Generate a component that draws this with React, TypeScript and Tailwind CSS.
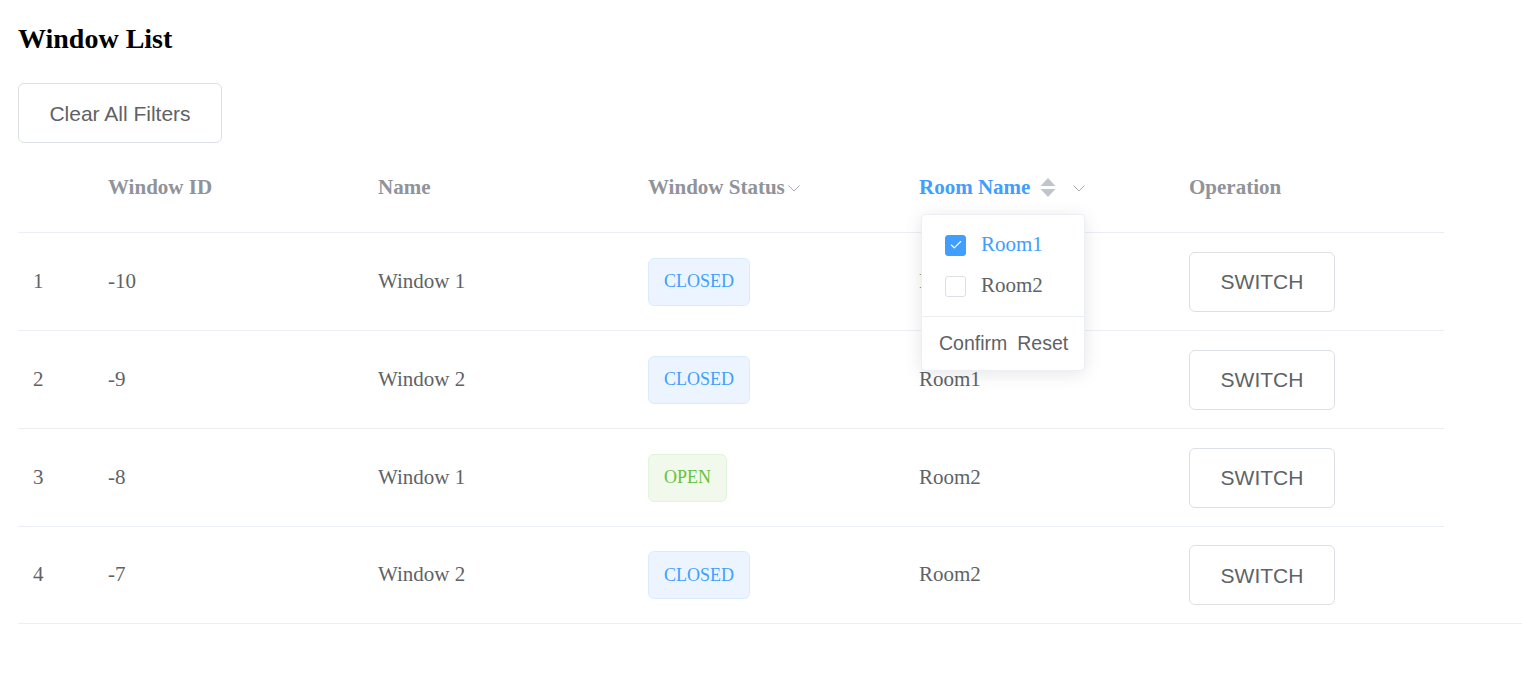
import { Check } from 'lucide-react';

const ROWS = [
  { idx: 1, id: '-10', name: 'Window 1', status: 'CLOSED', room: 'Room1' },
  { idx: 2, id: '-9', name: 'Window 2', status: 'CLOSED', room: 'Room1' },
  { idx: 3, id: '-8', name: 'Window 1', status: 'OPEN', room: 'Room2' },
  { idx: 4, id: '-7', name: 'Window 2', status: 'CLOSED', room: 'Room2' },
];

const COLS = 'grid grid-cols-[75px_270px_270px_271px_270px_270px]';

function Chevron() {
  return (
    <svg width="12" height="7" viewBox="0 0 12 7" fill="none" className="ml-[3px] mt-[2px]">
      <path d="M0.5 0.5 L6 6 L11.5 0.5" stroke="#a8abb2" strokeWidth="1" />
    </svg>
  );
}

function SortCaret() {
  return (
    <svg width="16" height="19" viewBox="0 0 16 19" className="ml-[10px]">
      <path d="M8 0 L15.5 8 L0.5 8 Z" fill="#c0c4cc" />
      <path d="M0.5 11 L15.5 11 L8 19 Z" fill="#c0c4cc" />
    </svg>
  );
}

function StatusTag({ status }: { status: string }) {
  const open = status === 'OPEN';
  return (
    <span
      className={
        'inline-flex h-[48px] items-center rounded-[6px] border px-[15px] text-[18px] ' +
        (open ? 'border-[#e1f3d8] bg-[#f0f9eb] text-[#67c23a]' : 'border-[#d9ecff] bg-[#ecf5ff] text-[#409eff]')
      }
    >
      {status}
    </span>
  );
}

export default function App() {
  return (
    <div className="min-h-screen bg-white pl-[18px] font-['Liberation_Serif',serif] text-[21px] text-[#606266]">
      <h3 className="pt-[22px] text-[28px] font-bold leading-[34px] text-black">Window List</h3>

      <button className="mt-[27px] h-[60px] w-[204px] rounded-[6px] border border-[#dcdfe6] bg-white pt-px font-['Liberation_Sans',sans-serif] text-[21px] text-[#606266]">
        Clear All Filters
      </button>

      <div className="relative">
        {/* Header */}
        <div className={COLS + ' h-[90px] w-[1426px] items-center border-b border-[#ebeef5] font-bold text-[#909399]'}>
          <div />
          <div className="pl-[15px]">Window ID</div>
          <div className="pl-[15px]">Name</div>
          <div className="flex items-center pl-[15px]">
            Window Status
            <Chevron />
          </div>
          <div className="flex items-center pl-[15px] text-[#409eff]">
            Room Name
            <SortCaret />
            <span className="ml-[14px]">
              <Chevron />
            </span>
          </div>
          <div className="pl-[15px]">Operation</div>
        </div>

        {/* Body */}
        {ROWS.map((r, i) => (
          <div
            key={r.idx}
            className={
              COLS +
              ' w-[1426px] items-center ' +
              (i < ROWS.length - 1 ? 'h-[98px] border-b border-[#ebeef5]' : 'h-[96px]')
            }
          >
            <div className="pl-[15px]">{r.idx}</div>
            <div className="pl-[15px]">{r.id}</div>
            <div className="pl-[15px]">{r.name}</div>
            <div className="pl-[15px]">
              <StatusTag status={r.status} />
            </div>
            <div className="pl-[15px]">{r.room}</div>
            <div className="pl-[15px]">
              <button className="h-[60px] w-[146px] rounded-[6px] border border-[#dcdfe6] bg-white pt-px font-['Liberation_Sans',sans-serif] text-[21px] text-[#606266]">
                SWITCH
              </button>
            </div>
          </div>
        ))}
        <div className="h-px w-full bg-[#ebeef5]" />

        {/* Room filter popover */}
        <div className="absolute left-[903px] top-[71px] w-[164px] rounded-[4px] border border-[#ebeef5] bg-white shadow-[0_3px_18px_0_rgba(0,0,0,0.1)]">
          <div className="flex flex-col gap-[19px] px-[23px] pb-[19px] pt-[19px]">
            <label className="flex h-[22px] items-center">
              <span className="flex h-[21px] w-[21px] items-center justify-center rounded-[3px] border border-[#409eff] bg-[#409eff]">
                <Check size={14} strokeWidth={2} color="white" />
              </span>
              <span className="ml-[15px] text-[#409eff]">Room1</span>
            </label>
            <label className="flex h-[22px] items-center">
              <span className="h-[21px] w-[21px] rounded-[3px] border border-[#dcdfe6] bg-white" />
              <span className="ml-[15px]">Room2</span>
            </label>
          </div>
          <div className="flex h-[54px] items-center gap-[10px] border-t border-[#ebeef5] pl-[17px] font-['Liberation_Sans',sans-serif] text-[19.5px] text-[#606266]">
            <span>Confirm</span>
            <span>Reset</span>
          </div>
        </div>
      </div>
    </div>
  );
}
